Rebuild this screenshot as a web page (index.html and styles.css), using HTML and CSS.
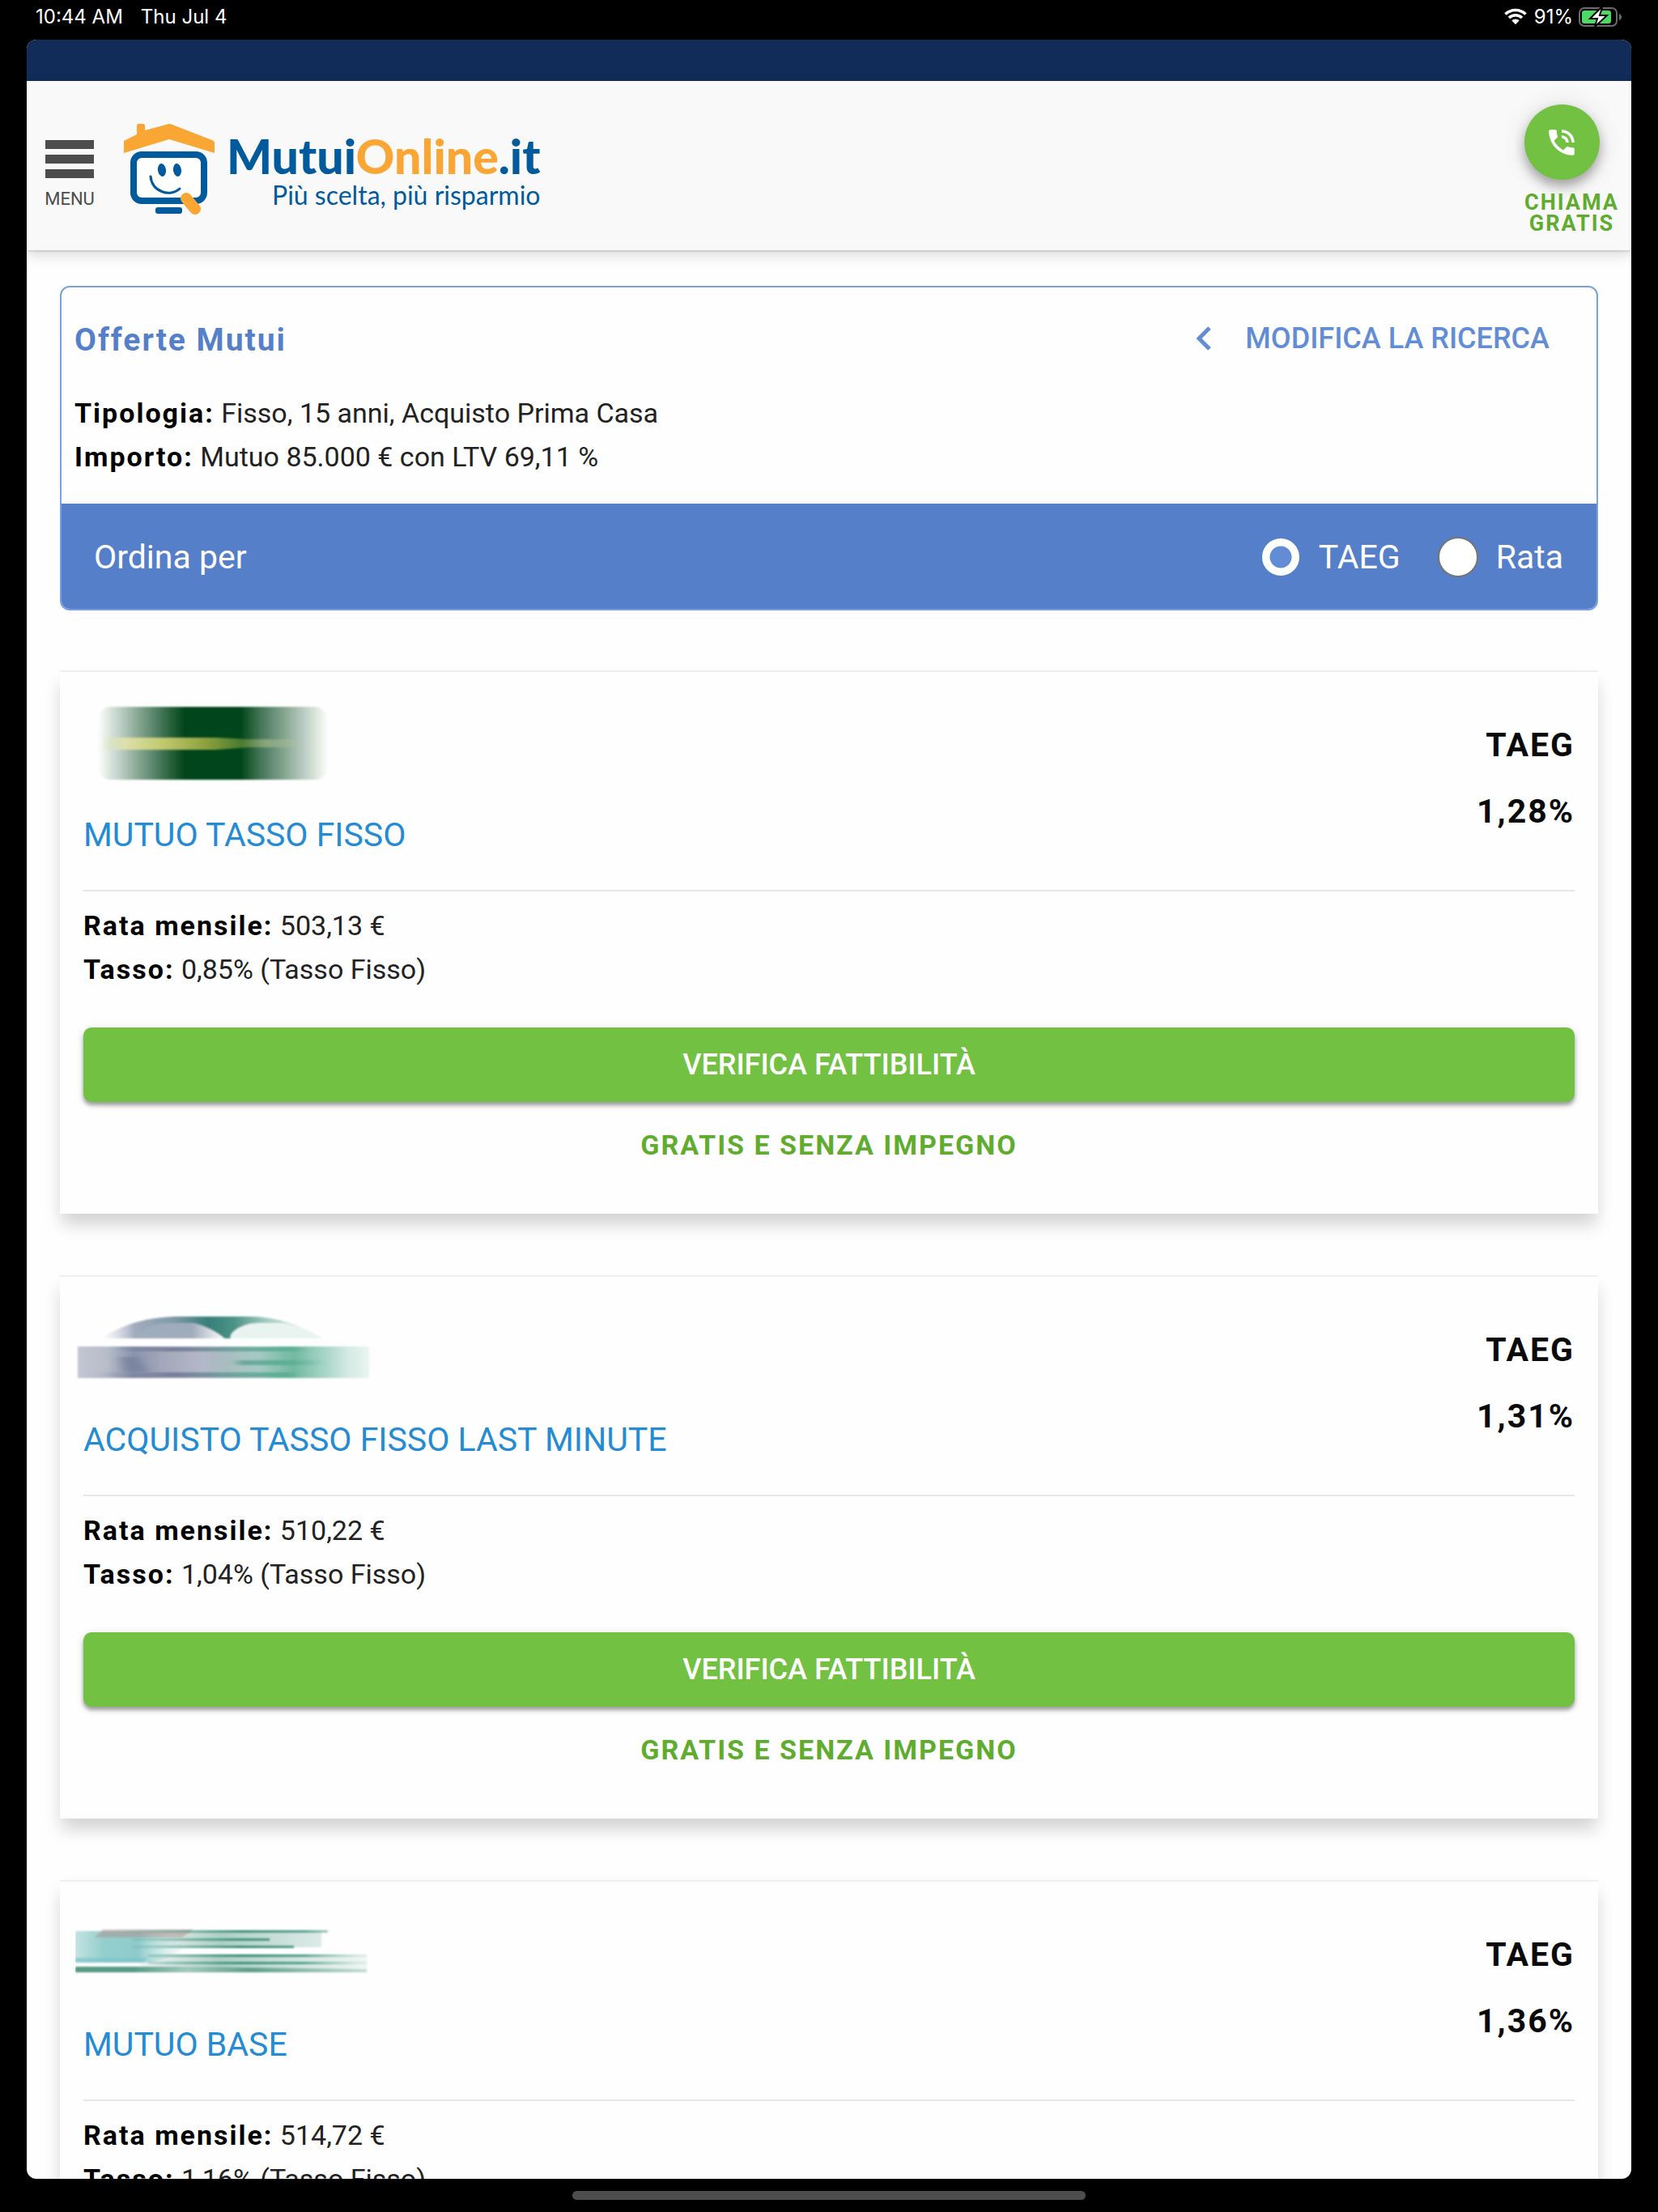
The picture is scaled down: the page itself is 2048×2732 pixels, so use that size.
FILE: index.html
```html
<!DOCTYPE html>
<html lang="it">
<head>
  <meta charset="UTF-8" />
  <meta name="viewport" content="width=device-width, initial-scale=1" />
  <title>MutuiOnline.it - Offerte Mutui</title>
  <link rel="stylesheet" href="styles.css">
</head>
<body>
  <div class="status-bar">
    <span>10:44 AM</span>
    <span>Thu Jul 4</span>
    <div class="status-right">
      <svg class="wifi" viewBox="0 0 28 21" width="28" height="21">
        <path d="M1.5 7.5a18 18 0 0 1 25 0M6 12a11.5 11.5 0 0 1 16 0" fill="none" stroke="#fff" stroke-width="3.6" />
        <path d="M9.3 15.3a6.8 6.8 0 0 1 9.4 0L14 20.2z" fill="#fff" />
      </svg>
      <span>91%</span>
      <svg class="battery" viewBox="0 0 54 24" width="54" height="24">
        <rect x="1" y="1" width="46" height="22" rx="6" fill="none" stroke="#6b6b6b" stroke-width="2" />
        <path d="M50 8c4 1.500 4 6.500 0 8z" fill="#6b6b6b" />
        <rect x="4" y="4" width="36" height="16" rx="3" fill="#4cd964" />
        <path d="M28 0L14 14h9l-3 10L35 10h-9l3-10z" fill="#fff" stroke="#000" stroke-width="2" />
      </svg>
    </div>
  </div>

  <div class="app">
    <div class="top-strip"></div>
    <header class="header">
      <button class="menu-btn" type="button">
        <svg viewBox="0 0 60 48" width="60" height="48">
          <path d="M0 0h60v11H0zM0 18h60v11H0zM0 36h60v11H0z" fill="#4d4d4d" />
        </svg>
        MENU
      </button>
      <a class="logo" href="#">
        <svg viewBox="0 0 112 112" width="112" height="112">
          <rect x="12" y="38" width="87" height="57" rx="10" fill="#fff" stroke="#005a9c" stroke-width="8" />
          <path d="M0 21l16-8V2q0-2 2-2h6q2 0 2 2v6L52 1q4-2 8 0l49 19q3 1 3 4v12L56 19 0 36z" fill="#faa635" />
          <ellipse cx="47" cy="57" rx="5" ry="8" fill="#005a9c" transform="rotate(-8 47 57)" />
          <ellipse cx="66" cy="57" rx="5" ry="8" fill="#005a9c" transform="rotate(-8 66 57)" />
          <path d="M33 65c2 19 24 26 36 15" fill="none" stroke="#005a9c" stroke-width="3" stroke-linecap="round" />
          <rect x="39" y="103" width="33" height="8" rx="3" fill="#005a9c" />
          <path d="M77 92l11 13" stroke="#faa635" stroke-width="14" stroke-linecap="round" />
        </svg>
        <span class="logo-text">
          <span class="logo-name">Mutui<span class="logo-orange">Online</span>.it</span>
          <span class="logo-claim">Più scelta, più risparmio</span>
        </span>
      </a>
      <a class="call" href="#">
        <span class="call-circle">
          <svg viewBox="0 0 24 24" width="42" height="42">
            <path d="M20 15.500c-1.250 0-2.450-.2-3.570-.57a1.020 1.020 0 0 0-1.020.24l-2.200 2.200a15.050 15.050 0 0 1-6.590-6.590l2.200-2.210a.96.96 0 0 0 .25-1A11.360 11.360 0 0 1 8.500 4c0-.55-.45-1-1-1H4c-.55 0-1 .45-1 1 0 9.390 7.610 17 17 17 .55 0 1-.45 1-1v-3.500c0-.55-.45-1-1-1zM19 12h2a9 9 0 0 0-9-9v2c3.870 0 7 3.130 7 7zm-4 0h2c0-2.760-2.240-5-5-5v2c1.660 0 3 1.340 3 3z" fill="#fff" />
          </svg>
        </span>
        <span class="call-text">CHIAMA<br>GRATIS</span>
      </a>
    </header>

    <main class="content">
      <section class="search-box">
        <div class="search-info">
          <div class="search-head">
            <h1>Offerte Mutui</h1>
            <a class="edit-link" href="#">
              <svg viewBox="0 0 18 30" width="18" height="30">
                <path d="M16 2L3 15l13 13" fill="none" stroke="#628dd5" stroke-width="5" />
              </svg>
              MODIFICA LA RICERCA
            </a>
          </div>
          <p><b>Tipologia:</b> Fisso, 15 anni, Acquisto Prima Casa</p>
          <p><b>Importo:</b> Mutuo 85.000 € con LTV 69,11 %</p>
        </div>
        <div class="sort-bar">
          <span class="sort-title">Ordina per</span>
          <label class="sort-option"><input type="radio" name="sort" value="taeg" checked> TAEG</label>
          <label class="sort-option"><input type="radio" name="sort" value="rata"> Rata</label>
        </div>
      </section>

      <article class="offer">
        <div class="offer-head">
          <div>
            <svg class="bank-logo" viewBox="0 0 364 110" width="364" height="110">
              <defs>
                <linearGradient id="green">
                  <stop offset="0" stop-color="#00441a" stop-opacity="0" />
                  <stop offset=".15" stop-color="#00441a" stop-opacity=".4" />
                  <stop offset=".28" stop-color="#00441a" stop-opacity=".75" />
                  <stop offset=".38" stop-color="#00441a" />
                  <stop offset=".62" stop-color="#00441a" />
                  <stop offset=".7" stop-color="#00441a" stop-opacity=".75" />
                  <stop offset=".87" stop-color="#00441a" stop-opacity=".33" />
                  <stop offset="1" stop-color="#00441a" stop-opacity="0" />
                </linearGradient>
                <linearGradient id="yellow">
                  <stop offset="0" stop-color="#e4e7c0" stop-opacity=".2" />
                  <stop offset=".1" stop-color="#dfe2ae" />
                  <stop offset=".28" stop-color="#c3cb72" />
                  <stop offset=".5" stop-color="#8fa23f" />
                  <stop offset=".68" stop-color="#4a7a30" />
                  <stop offset=".8" stop-color="#8aa67c" />
                  <stop offset="1" stop-color="#c6d2b8" stop-opacity="0" />
                </linearGradient>
                <filter id="soft"><feGaussianBlur stdDeviation="1" /></filter>
                <filter id="softer"><feGaussianBlur stdDeviation="6 1" /></filter>
              </defs>
              <rect x="28" y="10" width="284" height="90" rx="16" fill="url(#green)" filter="url(#soft)" />
              <path d="M34 48h140l40 2h72v10h-72l-40 3H34z" fill="url(#yellow)" filter="url(#soft)" />
            </svg>
            <h2><a href="#">MUTUO TASSO FISSO</a></h2>
          </div>
          <div class="rate">TAEG<br>1,28%</div>
        </div>
        <div class="offer-body">
          <p><b>Rata mensile:</b> 503,13 €</p>
          <p><b>Tasso:</b> 0,85% (Tasso Fisso)</p>
          <button class="cta" type="button">VERIFICA FATTIBILITÀ</button>
          <p class="cta-note">GRATIS E SENZA IMPEGNO</p>
        </div>
      </article>

      <article class="offer">
        <div class="offer-head">
          <div>
            <svg class="bank-logo" viewBox="0 0 364 110" width="364" height="110">
              <defs>
                <linearGradient id="arc">
                  <stop offset="0" stop-color="#c9cddd" stop-opacity="0" />
                  <stop offset=".15" stop-color="#a3acbf" />
                  <stop offset=".33" stop-color="#7e9aa6" />
                  <stop offset=".48" stop-color="#367f79" />
                  <stop offset=".6" stop-color="#4c9286" />
                  <stop offset=".76" stop-color="#a9d0c5" />
                  <stop offset="1" stop-color="#e9f4f1" />
                </linearGradient>
                <linearGradient id="arcin">
                  <stop offset="0" stop-color="#9facbb" />
                  <stop offset=".65" stop-color="#9facbb" />
                  <stop offset="1" stop-color="#fff" />
                </linearGradient>
                <linearGradient id="band">
                  <stop offset="0" stop-color="#c3c5d1" />
                  <stop offset=".1" stop-color="#b8bdca" />
                  <stop offset=".19" stop-color="#8893aa" />
                  <stop offset=".28" stop-color="#a0a6b8" />
                  <stop offset=".42" stop-color="#b4b7c6" />
                  <stop offset=".5" stop-color="#a9bcc1" />
                  <stop offset=".62" stop-color="#a5cbc2" />
                  <stop offset=".74" stop-color="#72b9a1" />
                  <stop offset=".85" stop-color="#a9d5c8" />
                  <stop offset=".93" stop-color="#d5eae4" />
                  <stop offset="1" stop-color="#eaf5f1" />
                </linearGradient>
                <linearGradient id="streak">
                  <stop offset="0" stop-color="#777e98" stop-opacity="0" />
                  <stop offset=".35" stop-color="#62678a" />
                  <stop offset=".6" stop-color="#57958f" />
                  <stop offset=".8" stop-color="#48a687" />
                  <stop offset="1" stop-color="#48a687" stop-opacity="0" />
                </linearGradient>
              </defs>
              <g filter="url(#soft)">
                <path d="M32 43C60 25 90 16 130 16h85c35 0 65 12 90 27z" fill="url(#arc)" />
                <path d="M70 43c12-12 28-19 46-19h30c16 4 30 12 38 19z" fill="url(#arcin)" />
                <path d="M192 43c-3-8 16-19 34-19h30c20 3 36 10 49 19z" fill="#e9f4f1" />
                <path d="M3 53h360v39H3z" fill="url(#band)" />
              </g>
              <g filter="url(#softer)">
                <path d="M50 54h230v5H70zM20 85h250v6H20zM200 70h110v6H200z" fill="url(#streak)" opacity=".7" />
                <path d="M55 66h22l14 18H60z" fill="#707c98" opacity=".6" />
              </g>
            </svg>
            <h2><a href="#">ACQUISTO TASSO FISSO LAST MINUTE</a></h2>
          </div>
          <div class="rate">TAEG<br>1,31%</div>
        </div>
        <div class="offer-body">
          <p><b>Rata mensile:</b> 510,22 €</p>
          <p><b>Tasso:</b> 1,04% (Tasso Fisso)</p>
          <button class="cta" type="button">VERIFICA FATTIBILITÀ</button>
          <p class="cta-note">GRATIS E SENZA IMPEGNO</p>
        </div>
      </article>

      <article class="offer">
        <div class="offer-head">
          <div>
            <svg class="bank-logo" viewBox="0 0 364 110" width="364" height="110">
              <defs>
                <linearGradient id="teal">
                  <stop offset="0" stop-color="#c4e2e2" />
                  <stop offset=".25" stop-color="#93cfcd" />
                  <stop offset=".55" stop-color="#8fcbca" />
                  <stop offset="1" stop-color="#d8eeee" stop-opacity="0" />
                </linearGradient>
                <linearGradient id="pale">
                  <stop offset="0" stop-color="#b5d4ca" stop-opacity="0" />
                  <stop offset=".4" stop-color="#aecfc4" />
                  <stop offset=".75" stop-color="#d6e7e2" />
                  <stop offset="1" stop-color="#f0f6f4" />
                </linearGradient>
                <linearGradient id="dark">
                  <stop offset="0" stop-color="#3f917c" stop-opacity="0" />
                  <stop offset=".5" stop-color="#3f917c" />
                  <stop offset=".75" stop-color="#5aa18e" />
                  <stop offset="1" stop-color="#a8d0c4" stop-opacity=".2" />
                </linearGradient>
                <linearGradient id="base">
                  <stop offset="0" stop-color="#569b84" />
                  <stop offset=".2" stop-color="#569b84" />
                  <stop offset=".38" stop-color="#a2c8bb" />
                  <stop offset=".6" stop-color="#5e9f8a" />
                  <stop offset="1" stop-color="#c6ddd5" />
                </linearGradient>
              </defs>
              <g filter="url(#soft)">
                <path d="M60 28h244v20H60zM80 57h280v20H80z" fill="url(#pale)" />
                <path d="M0 28h142l-4 18q-20 18-50 21H0z" fill="url(#teal)" />
                <path d="M0 61h90l-8 6H0z" fill="#7cc4c8" opacity=".7" />
                <path d="M34 26h112l-14 10H24z" fill="#b08f8a" opacity=".5" />
                <path d="M0 72h130l230 3v4H0z" fill="url(#base)" />
              </g>
              <g filter="url(#soft)">
                <path d="M50 27h262v3H50zM70 37h170v3H70zM70 46h200v3H70zM90 57h270v3H90zM90 66h270v3H90z" fill="url(#dark)" />
              </g>
            </svg>
            <h2><a href="#">MUTUO BASE</a></h2>
          </div>
          <div class="rate">TAEG<br>1,36%</div>
        </div>
        <div class="offer-body">
          <p><b>Rata mensile:</b> 514,72 €</p>
          <p><b>Tasso:</b> 1,16% (Tasso Fisso)</p>
        </div>
      </article>
    </main>
  </div>

  <div class="home-bar"></div>
</body>
</html>
```
FILE: styles.css
```css
* { box-sizing: border-box; }
body {
  margin: 0;
  height: 100vh;
  display: flex;
  flex-direction: column;
  background: #000;
  color: #222;
  font-family: Roboto, sans-serif;
  overflow: hidden;
}
h1, h2, p { margin: 0; }
a { text-decoration: none; }
button { border: 0; font-family: inherit; cursor: pointer; }
svg { display: block; flex: none; }

/* status bar */
.status-bar {
  flex: none;
  display: flex;
  align-items: center;
  gap: 22px;
  height: 49px;
  padding: 0 44px 8px;
  color: #fff;
  font: 24px/40px Inter, sans-serif;
}
.status-right { display: flex; align-items: center; gap: 7px; margin-left: auto; }
.wifi { margin-right: 2px; }

.app {
  flex: 1;
  min-height: 0;
  margin: 0 33px;
  border-radius: 12px;
  background: #fefefe;
  overflow: hidden;
}
.top-strip { height: 51px; background: #122c59; }

/* header */
.header {
  display: flex;
  align-items: center;
  padding: 29px 15px 20px 23px;
  background: #f9f9f9;
  box-shadow: 0 2px 2px rgba(0,0,0,.1), 0 6px 16px rgba(0,0,0,.14);
}
.menu-btn {
  display: flex;
  flex-direction: column;
  align-items: center;
  gap: 12px;
  width: 60px;
  margin-right: 37px;
  padding: 14px 0 0;
  background: none;
  color: #4d4d4d;
  font-size: 22px;
  line-height: 26px;
}
.logo { display: flex; gap: 15px; color: #005a9c; font-family: Lato, sans-serif; }
.logo-text { display: flex; flex-direction: column; align-items: flex-end; padding-top: 8px; }
.logo-name { font-size: 59px; line-height: 64px; font-weight: 900; }
.logo-orange { color: #faa635; }
.logo-claim { font-size: 32px; line-height: 32px; }
.call { margin-left: auto; color: #5fac2e; }
.call-circle {
  display: flex;
  align-items: center;
  justify-content: center;
  width: 93px;
  height: 93px;
  border-radius: 50%;
  background: #72c143;
  box-shadow: 0 8px 14px rgba(0,0,0,.3), 0 2px 32px rgba(0,0,0,.12);
}
.call-text {
  display: block;
  margin-top: 15px;
  font-size: 27px;
  line-height: 26px;
  font-weight: 700;
  letter-spacing: 2px;
  text-align: center;
}

.content { padding: 44px 41px; }

/* search summary */
.search-box {
  margin-bottom: 74px;
  border: 2px solid #7ba0dc;
  border-radius: 12px;
  overflow: hidden;
}
.search-info { padding: 42px 58px 31px 16px; }
.search-head { display: flex; align-items: flex-start; justify-content: space-between; margin-bottom: 40px; }
h1 { color: #557fc8; font-size: 39px; line-height: 46px; letter-spacing: 2px; }
.edit-link {
  display: flex;
  align-items: center;
  gap: 42px;
  color: #628dd5;
  font-size: 36px;
  line-height: 42px;
  font-weight: 500;
}
p { font-size: 34px; line-height: 54px; }
p b { color: #000; letter-spacing: 2px; }
.sort-bar {
  display: flex;
  align-items: center;
  min-height: 130px;
  padding: 2px 41px 0 40px;
  background: #557fc8;
  color: #fff;
  font-size: 41px;
  line-height: 48px;
}
.sort-title { margin-right: auto; }
.sort-option { display: flex; align-items: center; gap: 22px; margin-left: 46px; }
.sort-option input {
  appearance: none;
  width: 50px;
  height: 50px;
  margin: 0;
  border: 2px solid #757575;
  border-radius: 50%;
  background: #fff;
}
.sort-option input:checked {
  border-color: #557fc8;
  background: radial-gradient(circle, #628dd5 13px, #fff 14px);
}

/* offers */
.offer {
  margin-bottom: 76px;
  padding: 0 29px 58px;
  border-top: 2px solid #efefef;
  background: #fefefe;
  box-shadow: 0 16px 20px -2px rgba(0,0,0,.14), 0 10px 24px rgba(0,0,0,.04);
}
.offer:last-child { min-height: 671px; }
.offer-head {
  display: flex;
  justify-content: space-between;
  padding: 33px 0 44px;
  border-bottom: 2px solid #e6e6e6;
}
.bank-logo { margin: 0 0 34px -10px; }
h2 { font-size: 41px; line-height: 48px; font-weight: 400; }
h2 a { color: #258bd2; }
.rate {
  padding-top: 16px;
  color: #0a0a0a;
  font-size: 41px;
  line-height: 82px;
  font-weight: 700;
  letter-spacing: 2px;
  text-align: right;
}
.offer-body { padding-top: 15px; }
.cta {
  display: block;
  width: 100%;
  margin: 45px 0 26px;
  padding: 22px;
  border-radius: 10px;
  background: #72c143;
  box-shadow: 0 4px 5px rgba(0,0,0,.35), 0 2px 12px rgba(0,0,0,.1);
  color: #fff;
  font-size: 36px;
  line-height: 48px;
  font-weight: 500;
}
.cta-note { color: #5fac2e; font-weight: 700; letter-spacing: 2px; text-align: center; }

.home-bar {
  flex: none;
  align-self: center;
  width: 31%;
  height: 11px;
  margin: 15px 0;
  border-radius: 6px;
  background: #4d4d4d;
}
```
